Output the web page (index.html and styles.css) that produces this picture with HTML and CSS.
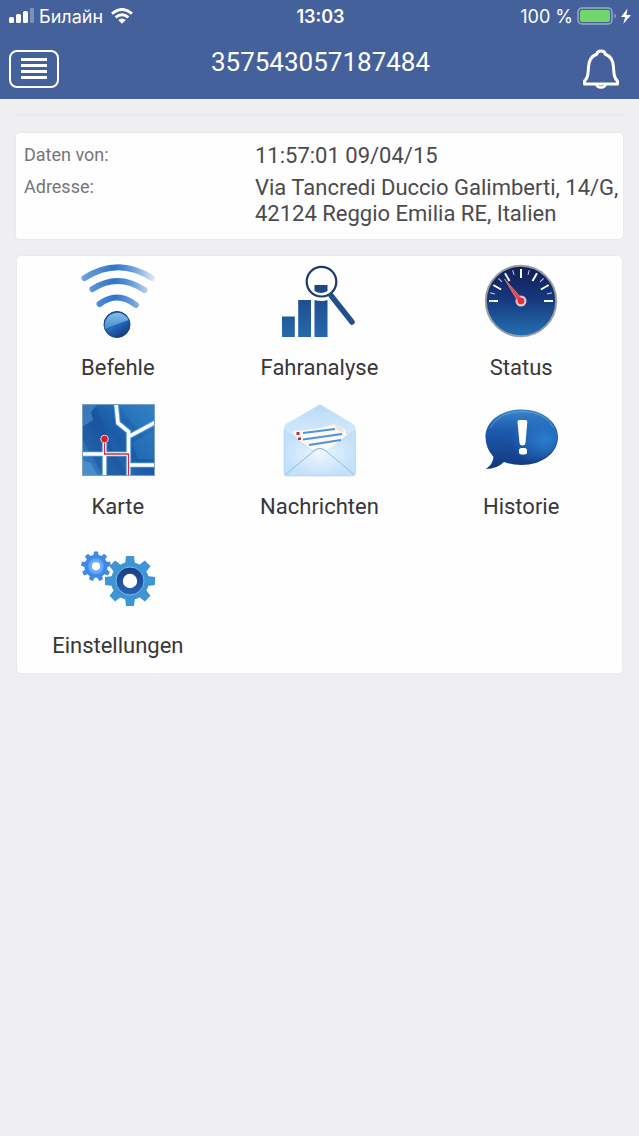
FILE: index.html
```html
<!DOCTYPE html>
<html lang="de">
<head>
    <meta charset="UTF-8">
    <meta name="viewport" content="width=device-width, initial-scale=1.0">
    <title>357543057187484</title>
    <link rel="stylesheet" href="styles.css">
</head>
<body>
    <header class="header">
        <div class="status-bar">
            <div class="carrier">
                <svg width="26" height="16" viewBox="0 0 26 16" fill="#fff" aria-hidden="true">
                    <rect x="0" y="9" width="5" height="6" rx="1.5"/>
                    <rect x="7" y="6" width="5" height="9" rx="1.5"/>
                    <rect x="14" y="3" width="5" height="12" rx="1.5"/>
                    <rect x="21" y="0" width="4" height="15" rx="1" opacity=".3"/>
                </svg>
                <span>Билайн</span>
                <svg class="wifi" width="22" height="16" viewBox="0 0 22 16" aria-hidden="true">
                    <g fill="none" stroke="#fff" stroke-width="2.9">
                        <path d="M1 5.6Q11-2.8 21 5.6"/>
                        <path d="M4.6 9.4Q11 4 17.4 9.4"/>
                    </g>
                    <path d="M7.2 12Q11 8.8 14.8 12L11 15.8Z" fill="#fff"/>
                </svg>
            </div>
            <div class="clock">13:03</div>
            <div class="battery">
                <span>100 %</span>
                <svg width="55" height="18" viewBox="0 0 55 18" aria-hidden="true">
                    <rect x="1" y="1" width="34" height="16" rx="4" fill="none" stroke="#9caac9" stroke-width="1.5"/>
                    <rect x="3" y="3" width="30" height="12" rx="2" fill="#73d66c"/>
                    <path d="M37.500 6.500q3 2.500 0 5Z" fill="#9caac9"/>
                    <path d="M50.500 1.500 44 10h4.200l-2 7L54 8h-4.600Z" fill="#fff"/>
                </svg>
            </div>
        </div>
        <div class="toolbar">
            <button class="menu-button" type="button" aria-label="Menü">
                <svg width="26" height="24" viewBox="0 0 26 24" aria-hidden="true">
                    <path d="M0 2.500h26M0 8.500h26M0 14.500h26M0 20.500h26" stroke="#fff" stroke-width="3"/>
                </svg>
            </button>
            <h1>357543057187484</h1>
            <button class="bell-button" type="button" aria-label="Benachrichtigungen">
                <svg width="38" height="40" viewBox="0 0 38 40" fill="none" stroke="#fff" stroke-linejoin="round" aria-hidden="true">
                    <path d="M15 5Q15 2 19 2Q23 2 23 5Q31 8 31.500 18C32 27 32.500 29 35.500 32V35H2.500V32C5.500 29 6 27 6.500 18Q7 8 15 5Z" stroke-width="3"/>
                    <path d="M14.500 35.500Q15 38.500 19 38.500T23.500 35.500" stroke-width="2.400"/>
                </svg>
            </button>
        </div>
    </header>

    <main class="content">
        <hr class="divider">

        <dl class="card info">
            <dt>Daten von:</dt>
            <dd>11:57:01 09/04/15</dd>
            <dt>Adresse:</dt>
            <dd>Via Tancredi Duccio Galimberti, 14/G, 42124 Reggio Emilia RE, Italien</dd>
        </dl>

        <nav class="card tiles">
            <a class="tile" href="#befehle">
                <svg viewBox="0 0 74 74" aria-hidden="true">
                    <defs>
                        <linearGradient id="waveFill" gradientUnits="userSpaceOnUse" x1="0" y1="0" x2="74" y2="0">
                            <stop offset="0" stop-color="#6fa4e3"/>
                            <stop offset=".45" stop-color="#2f73c8"/>
                            <stop offset=".7" stop-color="#6b9edb"/>
                            <stop offset="1" stop-color="#e1ecf8"/>
                        </linearGradient>
                        <linearGradient id="ballFill" x1="0" y1="0" x2=".6" y2="1">
                            <stop offset="0" stop-color="#174b92"/>
                            <stop offset=".6" stop-color="#2768bf"/>
                            <stop offset="1" stop-color="#123d82"/>
                        </linearGradient>
                        <linearGradient id="ballShine" x1="0" y1="0" x2="0" y2="1">
                            <stop offset="0" stop-color="#83bce7"/>
                            <stop offset="1" stop-color="#4a8dcc"/>
                        </linearGradient>
                    </defs>
                    <g fill="none" stroke="url(#waveFill)" stroke-width="6" stroke-linecap="round">
                        <path d="M3.500 14Q37-7.500 71 14"/>
                        <path d="M11.500 25Q37 8.500 63.500 26"/>
                        <path d="M18.500 40Q36.500 26.500 55 41"/>
                    </g>
                    <circle cx="36" cy="60.500" r="13" fill="url(#ballFill)" stroke="#173f78" stroke-width="1"/>
                    <path d="M23.700 62.500A12.500 12.500 0 0 1 47.500 56Q36 60 23.700 65Z" fill="url(#ballShine)"/>
                </svg>
                <span>Befehle</span>
            </a>
            <a class="tile" href="#fahranalyse">
                <svg viewBox="0 0 74 74" aria-hidden="true">
                    <defs>
                        <linearGradient id="barFill" gradientUnits="userSpaceOnUse" x1="0" y1="20" x2="0" y2="73">
                            <stop offset="0" stop-color="#1d4382"/>
                            <stop offset="1" stop-color="#2569ae"/>
                        </linearGradient>
                    </defs>
                    <path d="M0 52.500H12.800V73H0ZM16.200 36H29V73H16.200ZM32.500 36Q40 38 45.500 36V73H32.500ZM32.500 21H45.500V27Q39 31 32.500 27Z" fill="url(#barFill)"/>
                    <circle cx="39.500" cy="17.700" r="14.800" fill="none" stroke="#1c3970" stroke-width="2.200"/>
                    <path d="M49 31.500 70 58" stroke="#234f8b" stroke-width="5.500" stroke-linecap="round"/>
                </svg>
                <span>Fahranalyse</span>
            </a>
            <a class="tile" href="#status">
                <svg viewBox="0 0 74 74" aria-hidden="true">
                    <defs>
                        <linearGradient id="dialFill" x1="0" y1="0" x2="0" y2="1">
                            <stop offset="0" stop-color="#111e59"/>
                            <stop offset=".45" stop-color="#163679"/>
                            <stop offset="1" stop-color="#2371b5"/>
                        </linearGradient>
                    </defs>
                    <circle cx="37" cy="37" r="35.200" fill="url(#dialFill)" stroke="#9b9da3" stroke-width="2"/>
                    <g stroke="#fff" stroke-width="2">
                        <path id="tick" d="M5 37H14"/>
                        <use href="#tick" transform="rotate(30 37 37)"/>
                        <use href="#tick" transform="rotate(60 37 37)"/>
                        <use href="#tick" transform="rotate(90 37 37)"/>
                        <use href="#tick" transform="rotate(120 37 37)"/>
                        <use href="#tick" transform="rotate(150 37 37)"/>
                        <use href="#tick" transform="rotate(180 37 37)"/>
                    </g>
                    <g stroke="#c5d1e6" stroke-width="1">
                        <path id="smallTick" d="M5 37H10"/>
                        <use href="#smallTick" transform="rotate(15 37 37)"/>
                        <use href="#smallTick" transform="rotate(45 37 37)"/>
                        <use href="#smallTick" transform="rotate(75 37 37)"/>
                        <use href="#smallTick" transform="rotate(105 37 37)"/>
                        <use href="#smallTick" transform="rotate(135 37 37)"/>
                        <use href="#smallTick" transform="rotate(165 37 37)"/>
                    </g>
                    <circle cx="37" cy="37" r="5.500" fill="#d9cbd0"/>
                    <path d="M20.500 15 35 39 39 36Z" fill="#e9444d" stroke="#f08f92" stroke-width=".7"/>
                    <circle cx="37" cy="37" r="3.300" fill="#e32f38"/>
                </svg>
                <span>Status</span>
            </a>
            <a class="tile" href="#karte">
                <svg viewBox="0 0 74 74" aria-hidden="true">
                    <defs>
                        <linearGradient id="mapFill" x1="0" y1="1" x2="1" y2="0">
                            <stop offset="0" stop-color="#3a82c4"/>
                            <stop offset=".5" stop-color="#1b5aa6"/>
                            <stop offset="1" stop-color="#2f7fc4"/>
                        </linearGradient>
                        <clipPath id="mapClip"><rect x="1" y="1" width="73" height="72"/></clipPath>
                    </defs>
                    <g clip-path="url(#mapClip)">
                        <rect x="1" y="1" width="73" height="72" fill="url(#mapFill)"/>
                        <path d="M1 1H14L31 45 48 73H22L1 35Z" fill="#174f98" opacity=".5"/>
                        <path d="M1 1H17L10 9 12 17 1 24ZM1 57 10 60 17 73H1Z" fill="#67a4d5" opacity=".45"/>
                        <path d="M37 1H74V19L58 25 49 18ZM51 40 74 26V56H57Z" fill="#378cca" opacity=".3"/>
                        <g fill="none" stroke="#5cadea" stroke-width="5.500" opacity=".65">
                            <path d="M35 0 37 20 47.500 28.500V74M48 33.500 75 19M0 51H48M23.500 40V74M48 62H75"/>
                        </g>
                        <path d="M35 0 37 20 47.500 28.500V74M48 33.500 75 19M0 51H48M23.500 40V74M48 62H75" fill="none" stroke="#fff" stroke-width="3.600"/>
                        <path d="M23.500 38V51H47.500V74" fill="none" stroke="#c92f42" stroke-width="1.300"/>
                        <circle cx="23.500" cy="36" r="3.800" fill="#d61f2b" stroke="#f1cbd2" stroke-width="1"/>
                    </g>
                    <rect x="1.500" y="1.500" width="72" height="71" fill="none" stroke="#7d9fc5" stroke-width="1"/>
                </svg>
                <span>Karte</span>
            </a>
            <a class="tile" href="#nachrichten">
                <svg viewBox="0 0 74 74" aria-hidden="true">
                    <defs>
                        <linearGradient id="envelopeFill" x1="0" y1="0" x2="0" y2="1">
                            <stop offset="0" stop-color="#b9dcf8"/>
                            <stop offset=".5" stop-color="#d9ecfc"/>
                            <stop offset="1" stop-color="#c0e0fa"/>
                        </linearGradient>
                        <radialGradient id="pocketFill">
                            <stop offset="0" stop-color="#eef7ff"/>
                            <stop offset="1" stop-color="#c4e1fa"/>
                        </radialGradient>
                    </defs>
                    <path d="M2 25Q2 23 4 21L35 3Q38 0 41 3L71 21Q73.500 23 73.500 25V70Q73.500 73 70.500 73H5Q2 73 2 70Z" fill="url(#envelopeFill)"/>
                    <path d="M11 28Q32 27 53 21L63 26 65 33 45 48 37 45 30 48 15 36Z" fill="#fcf8f5" stroke="#d5dce8" stroke-width=".5"/>
                    <path d="M53 21Q54 28 62 29Q61 23 53 21Z" fill="#e6e4e7"/>
                    <path d="M2 27 31 48Q37 43 44 48L73.500 27V70Q73.500 73 70.500 73H5Q2 73 2 70Z" fill="url(#pocketFill)" stroke="#aacff1" stroke-width=".6"/>
                    <path d="M11 29 53 23 65 32 46 47Q38 42 30 47L17 37Z" fill="#fcf8f5"/>
                    <path d="M53 22Q54 28 61 29Q60 24 53 22Z" fill="#e6e4e7"/>
                    <path d="M21 30 53 26M21 36.500 60 31M27 42 59 37" stroke="#4c95d9" stroke-width="1.900"/>
                    <path d="M14.500 29h3v3h-3ZM16 34.500h3v2.500h-3Z" fill="#c22f2e"/>
                    <path d="M3.500 71.500 32 48Q38 43 44 48L72 71.500" fill="none" stroke="#8bbbe8" stroke-width="1"/>
                </svg>
                <span>Nachrichten</span>
            </a>
            <a class="tile" href="#historie">
                <svg viewBox="0 0 74 74" aria-hidden="true">
                    <defs>
                        <linearGradient id="bubbleFill" x1="0" y1="0" x2="0" y2="1">
                            <stop offset="0" stop-color="#3a86c9"/>
                            <stop offset=".35" stop-color="#1d5aad"/>
                            <stop offset="1" stop-color="#123780"/>
                        </linearGradient>
                        <radialGradient id="bubbleGlow" cx=".82" cy=".55" r=".5">
                            <stop offset="0" stop-color="#2a7dce"/>
                            <stop offset="1" stop-color="#2a7dce" stop-opacity="0"/>
                        </radialGradient>
                    </defs>
                    <path d="M37.500 6.500C58 6.500 74 18.500 74 34C74 50 58 62 37.500 62Q28 62 20 59Q13 66 2 66Q9 61 9.500 54Q1.500 45 1.500 34C1.500 18.500 17 6.500 37.500 6.500Z" fill="url(#bubbleFill)"/>
                    <ellipse cx="38" cy="34" rx="35.500" ry="27" fill="url(#bubbleGlow)"/>
                    <path d="M6 25Q15 8.500 38 8.500T70 25" fill="none" stroke="#78b0df" stroke-width="1" opacity=".6"/>
                    <path d="M35.500 17H41.500Q43.500 17 43.300 19L41.500 40Q41.200 42.500 38.500 42.500T35.500 40L33.500 19Q33.400 17 35.500 17Z" fill="#fff"/>
                    <rect x="35" y="45" width="8" height="6.500" rx="2.500" fill="#fff"/>
                </svg>
                <span>Historie</span>
            </a>
            <a class="tile" href="#einstellungen">
                <svg viewBox="0 0 74 74" aria-hidden="true">
                    <defs>
                        <radialGradient id="smallGearFill">
                            <stop offset="0" stop-color="#9bcaff"/>
                            <stop offset="1" stop-color="#579df5"/>
                        </radialGradient>
                        <linearGradient id="hubFill" x1="0" y1="0" x2="0" y2="1">
                            <stop offset="0" stop-color="#163d82"/>
                            <stop offset="1" stop-color="#2762bd"/>
                        </linearGradient>
                    </defs>
                    <g fill="#3f88ea">
                        <circle cx="15" cy="24.300" r="11.500"/>
                        <path id="smallTooth" d="M12.300 14 13 9.500H17L17.700 14Z"/>
                        <use href="#smallTooth" transform="rotate(40 15 24.300)"/>
                        <use href="#smallTooth" transform="rotate(80 15 24.300)"/>
                        <use href="#smallTooth" transform="rotate(120 15 24.300)"/>
                        <use href="#smallTooth" transform="rotate(160 15 24.300)"/>
                        <use href="#smallTooth" transform="rotate(200 15 24.300)"/>
                        <use href="#smallTooth" transform="rotate(240 15 24.300)"/>
                        <use href="#smallTooth" transform="rotate(280 15 24.300)"/>
                        <use href="#smallTooth" transform="rotate(320 15 24.300)"/>
                    </g>
                    <circle cx="15" cy="24.300" r="8" fill="url(#smallGearFill)"/>
                    <circle cx="15" cy="24.300" r="4" fill="#fff"/>
                    <g fill="#3d95d3">
                        <circle cx="49" cy="39" r="19"/>
                        <path id="tooth" d="M44 22 45 14H53L54 22Z"/>
                        <use href="#tooth" transform="rotate(45 49 39)"/>
                        <use href="#tooth" transform="rotate(90 49 39)"/>
                        <use href="#tooth" transform="rotate(135 49 39)"/>
                        <use href="#tooth" transform="rotate(180 49 39)"/>
                        <use href="#tooth" transform="rotate(225 49 39)"/>
                        <use href="#tooth" transform="rotate(270 49 39)"/>
                        <use href="#tooth" transform="rotate(315 49 39)"/>
                    </g>
                    <circle cx="49" cy="39" r="14" fill="url(#hubFill)" stroke="#77b9e9" stroke-width="1"/>
                    <circle cx="49" cy="39" r="7.200" fill="#fff"/>
                </svg>
                <span>Einstellungen</span>
            </a>
        </nav>
    </main>
</body>
</html>
```
FILE: styles.css
```css
* {
    margin: 0;
    padding: 0;
    box-sizing: border-box;
}

body {
    min-height: 100vh;
    background-color: #efeef1;
    color: #3a3a3d;
    font-family: Roboto, "Liberation Sans", sans-serif;
}

.header {
    background-color: #45619b;
    color: #fff;
}

.status-bar {
    display: grid;
    grid-template-columns: 1fr auto 1fr;
    align-items: center;
    height: 32px;
    padding: 0 7px 0 9px;
    font-family: Inter, "Liberation Sans", sans-serif;
    font-size: 18px;
}

.carrier,
.battery {
    display: flex;
    align-items: center;
    gap: 4px;
}

.carrier .wifi {
    margin-left: 4px;
}

.battery {
    justify-content: flex-end;
}

.clock {
    font-weight: 600;
}

.toolbar {
    display: flex;
    justify-content: space-between;
    align-items: center;
    height: 67px;
    padding: 0 19px 6px 9px;
}

.toolbar h1 {
    padding-bottom: 2px;
    font-size: 26px;
    font-weight: 400;
}

.toolbar button {
    display: flex;
    justify-content: center;
    align-items: center;
    margin-top: 12px;
    background: none;
    border: none;
    cursor: pointer;
}

.toolbar .menu-button {
    width: 50px;
    height: 38px;
    border: 2px solid #fff;
    border-radius: 8px;
}

.content {
    padding: 15px 16px;
}

.divider {
    height: 2px;
    margin-bottom: 17px;
    background-color: #ebe9eb;
    border: none;
}

.card {
    background-color: #fefefe;
    border-radius: 4px;
    box-shadow: 0 0 2px rgba(0, 0, 0, 0.08);
}

.info {
    display: grid;
    grid-template-columns: 231px 1fr;
    row-gap: 6px;
    padding: 10px 0 12px 8px;
}

.info dt {
    color: #76757a;
    font-size: 18px;
    line-height: 24px;
}

.info dd {
    color: #4b4a4e;
    font-size: 22px;
    line-height: 26px;
}

.tiles {
    display: grid;
    grid-template-columns: repeat(3, 1fr);
    margin: 17px 1px;
}

.tile {
    display: flex;
    flex-direction: column;
    align-items: center;
    gap: 16px;
    padding: 8px 0 13px;
    color: #38363a;
    font-size: 22px;
    line-height: 28px;
    text-decoration: none;
}

.tile svg {
    width: 74px;
    height: 74px;
}
```
